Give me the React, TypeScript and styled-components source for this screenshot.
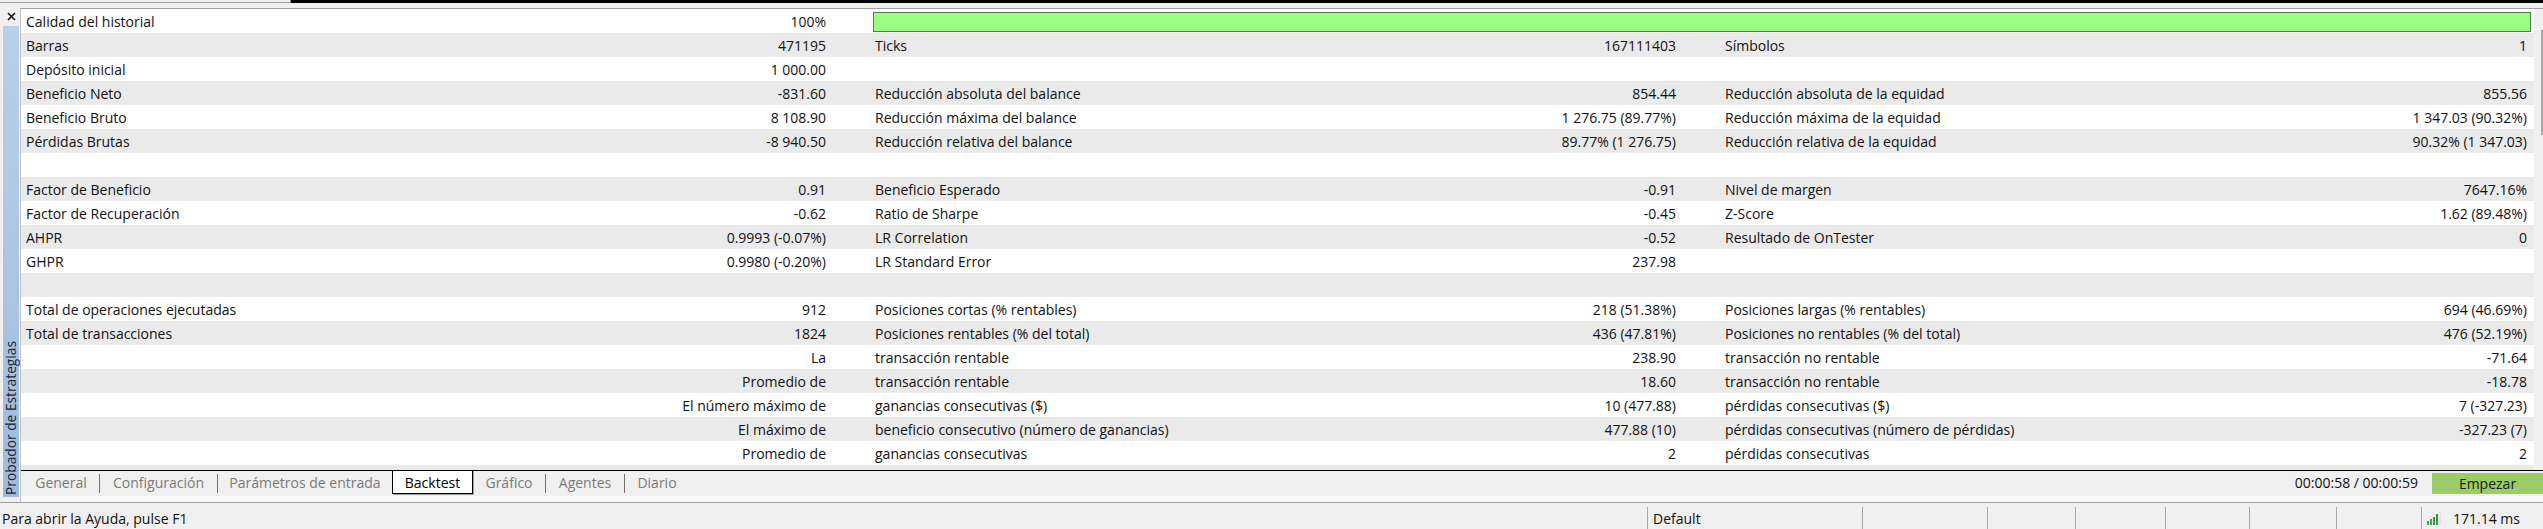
import React from "react";
import styled, { createGlobalStyle } from "styled-components";

const Global = createGlobalStyle`
  html, body { margin: 0; padding: 0; background: #f0f0f0; }
  #root { width: 2543px; height: 529px; overflow: hidden; }
  * { box-sizing: border-box; }
`;

const Page = styled.div`
  width: 2543px;
  height: 529px;
  display: flex;
  flex-direction: column;
  background: #f0f0f0;
  color: #111;
  font-family: "Open Sans", "Noto Sans", sans-serif;
  font-size: 14px;
  line-height: 25px;
`;

const TopEdge = styled.div`
  height: 8px;
  flex: none;
  display: flex;
  align-items: flex-start;
`;
const TopLeft = styled.div`
  width: 291px;
  height: 3px;
  border-bottom: 1px solid #a0a0a0;
  border-right: 1px solid #808080;
`;
const TopRight = styled.div`
  flex: 1;
  height: 3px;
  background: #000;
`;

const Main = styled.div`
  flex: none;
  height: 494px;
  display: flex;
`;

const Side = styled.div`
  width: 20px;
  flex: none;
  display: flex;
  flex-direction: column;
  padding-left: 3px;
`;
const Close = styled.div`
  height: 18px;
  flex: none;
  display: flex;
  align-items: center;
  justify-content: center;
  padding-bottom: 2px;
`;
const VBar = styled.div`
  width: 16px;
  height: 471px;
  flex: none;
  background: linear-gradient(#b9d0ea, #9fbbdc);
  display: flex;
  flex-direction: column;
  justify-content: flex-end;
  align-items: center;
`;
const VText = styled.span`
  writing-mode: vertical-rl;
  transform: rotate(180deg);
  font-size: 13.75px;
  line-height: 16px;
  padding-top: 2px;
  color: #1c2430;
  white-space: nowrap;
`;

const Content = styled.div`
  flex: 1;
  min-width: 0;
  display: flex;
  flex-direction: column;
  border-top: 1px solid #a0a0a0;
  border-left: 1px solid #c4c4c4;
`;

const TableArea = styled.div`
  flex: none;
  height: 461px;
  display: flex;
`;
const Table = styled.div`
  width: 2513px;
  flex: none;
  background: #fff;
  overflow: hidden;
`;
const Row = styled.div<{ $alt: boolean }>`
  height: 24px;
  display: grid;
  grid-template-columns: 800px 801px 802px;
  column-gap: 49px;
  padding-left: 5px;
  background: ${(p) => (p.$alt ? "#eaeaea" : "#fff")};
  white-space: pre;
`;
const Pair = styled.div`
  display: flex;
  justify-content: space-between;
  min-width: 0;
`;
const BarRow = styled.div`
  height: 24px;
  display: grid;
  grid-template-columns: 800px 1658px;
  column-gap: 47px;
  padding-left: 5px;
  align-items: center;
  white-space: pre;
`;
const Progress = styled.div`
  height: 20px;
  margin-top: 1px;
  background: #99ff80;
  border: 1px solid #557755;
`;
const ScrollTrack = styled.div`
  flex: 1;
  display: flex;
  justify-content: flex-end;
`;
const ScrollThumb = styled.div`
  width: 2px;
  height: 105px;
  margin-top: 21px;
  background: #a8a8a8;
`;

const TabBar = styled.div`
  flex: none;
  height: 26px;
  border-top: 1px solid #000;
  display: flex;
  align-items: flex-start;
  padding-left: 2px;
`;
const Tab = styled.div<{ $w: number; $active?: boolean }>`
  width: ${(p) => p.$w}px;
  height: ${(p) => (p.$active ? 24 : 23)}px;
  margin-top: ${(p) => (p.$active ? -1 : 0)}px;
  flex: none;
  text-align: center;
  line-height: 24px;
  color: ${(p) => (p.$active ? "#000" : "#7a7a7a")};
  background: ${(p) => (p.$active ? "#fff" : "transparent")};
  border: ${(p) => (p.$active ? "1px solid #000" : "none")};
  box-shadow: ${(p) => (p.$active ? "1px 1px 0 #a0a0a0" : "none")};
`;
const TabSep = styled.div`
  width: 1px;
  height: 19px;
  margin-top: 3px;
  flex: none;
  background: #707070;
`;
const Timer = styled.div`
  margin-left: auto;
  line-height: 24px;
  color: #111;
`;
const StartButton = styled.div`
  width: 111px;
  height: 21px;
  margin: 2px 0 0 14px;
  flex: none;
  background: #9ccc65;
  text-align: center;
  line-height: 22px;
  color: #14210a;
`;
const Strip = styled.div`
  flex: 1;
  background: #f9f9f9;
`;

const StatusBar = styled.div`
  flex: none;
  height: 27px;
  border-top: 1px solid #a0a0a0;
  padding-top: 4px;
  display: flex;
  line-height: 21px;
`;
const StatusCell = styled.div<{ $w?: number; $first?: boolean }>`
  width: ${(p) => (p.$w ? `${p.$w}px` : "auto")};
  flex: ${(p) => (p.$w ? "none" : "1")};
  display: flex;
  align-items: center;
  gap: 11px;
  padding-left: ${(p) => (p.$first ? 2 : 5)}px;
  border-left: ${(p) => (p.$first ? "none" : "1px solid #a8a8a8")};
  white-space: pre;
`;

type Cell = [string, string];
type R = [Cell, Cell, Cell];
const E: Cell = ["", ""];

const rows: R[] = [
  [["Barras", "471195"], ["Ticks", "167111403"], ["Símbolos", "1"]],
  [["Depósito inicial", "1 000.00"], E, E],
  [["Beneficio Neto", "-831.60"], ["Reducción absoluta del balance", "854.44"], ["Reducción absoluta de la equidad", "855.56"]],
  [["Beneficio Bruto", "8 108.90"], ["Reducción máxima del balance", "1 276.75 (89.77%)"], ["Reducción máxima de la equidad", "1 347.03 (90.32%)"]],
  [["Pérdidas Brutas", "-8 940.50"], ["Reducción relativa del balance", "89.77% (1 276.75)"], ["Reducción relativa de la equidad", "90.32% (1 347.03)"]],
  [E, E, E],
  [["Factor de Beneficio", "0.91"], ["Beneficio Esperado", "-0.91"], ["Nivel de margen", "7647.16%"]],
  [["Factor de Recuperación", "-0.62"], ["Ratio de Sharpe", "-0.45"], ["Z-Score", "1.62 (89.48%)"]],
  [["AHPR", "0.9993 (-0.07%)"], ["LR Correlation", "-0.52"], ["Resultado de OnTester", "0"]],
  [["GHPR", "0.9980 (-0.20%)"], ["LR Standard Error", "237.98"], E],
  [E, E, E],
  [["Total de operaciones ejecutadas", "912"], ["Posiciones cortas (% rentables)", "218 (51.38%)"], ["Posiciones largas (% rentables)", "694 (46.69%)"]],
  [["Total de transacciones", "1824"], ["Posiciones rentables (% del total)", "436 (47.81%)"], ["Posiciones no rentables (% del total)", "476 (52.19%)"]],
  [["", "La"], ["transacción rentable", "238.90"], ["transacción no rentable", "-71.64"]],
  [["", "Promedio de"], ["transacción rentable", "18.60"], ["transacción no rentable", "-18.78"]],
  [["", "El número máximo de"], ["ganancias consecutivas ($)", "10 (477.88)"], ["pérdidas consecutivas ($)", "7 (-327.23)"]],
  [["", "El máximo de"], ["beneficio consecutivo (número de ganancias)", "477.88 (10)"], ["pérdidas consecutivas (número de pérdidas)", "-327.23 (7)"]],
  [["", "Promedio de"], ["ganancias consecutivas", "2"], ["pérdidas consecutivas", "2"]],
  [E, E, E],
];

const CloseIcon = () => (
  <svg width="9" height="9" viewBox="0 0 9 9" aria-hidden="true">
    <path d="M1 1 L8 8 M8 1 L1 8" stroke="#111" strokeWidth="1.6" fill="none" />
  </svg>
);

const SignalIcon = () => (
  <svg width="15" height="13" viewBox="0 0 15 13" aria-hidden="true">
    <rect x="0" y="9" width="2" height="4" fill="#3fa34d" />
    <rect x="3" y="7" width="2" height="6" fill="#3fa34d" />
    <rect x="6" y="5" width="2" height="8" fill="#2f9a3f" />
    <rect x="9" y="2" width="2" height="11" fill="#2f9a3f" />
    <rect x="12" y="0" width="2" height="13" fill="#e4e4e4" />
  </svg>
);

export default function App() {
  return (
    <Page>
      <Global />
      <TopEdge>
        <TopLeft />
        <TopRight />
      </TopEdge>
      <Main>
        <Side>
          <Close>
            <CloseIcon />
          </Close>
          <VBar>
            <VText>Probador de Estrategias</VText>
          </VBar>
        </Side>
        <Content>
          <TableArea>
            <Table>
              <BarRow>
                <Pair>
                  <span>Calidad del historial</span>
                  <span>100%</span>
                </Pair>
                <Progress />
              </BarRow>
              {rows.map((r, i) => (
                <Row key={i} $alt={i % 2 === 0}>
                  {r.map((c, j) => (
                    <Pair key={j}>
                      <span>{c[0]}</span>
                      <span>{c[1]}</span>
                    </Pair>
                  ))}
                </Row>
              ))}
            </Table>
            <ScrollTrack>
              <ScrollThumb />
            </ScrollTrack>
          </TableArea>
          <TabBar>
            <Tab $w={76}>General</Tab>
            <TabSep />
            <Tab $w={117}>Configuración</Tab>
            <TabSep />
            <Tab $w={174}>Parámetros de entrada</Tab>
            <Tab $w={81} $active>
              Backtest
            </Tab>
            <Tab $w={72}>Gráfico</Tab>
            <TabSep />
            <Tab $w={78}>Agentes</Tab>
            <TabSep />
            <Tab $w={64}>Diario</Tab>
            <Timer>00:00:58 / 00:00:59</Timer>
            <StartButton>Empezar</StartButton>
          </TabBar>
          <Strip />
        </Content>
      </Main>
      <StatusBar>
        <StatusCell $w={1647} $first>
          Para abrir la Ayuda, pulse F1
        </StatusCell>
        <StatusCell $w={215}>Default</StatusCell>
        <StatusCell $w={125} />
        <StatusCell $w={88} />
        <StatusCell $w={90} />
        <StatusCell $w={84} />
        <StatusCell $w={87} />
        <StatusCell $w={85} />
        <StatusCell>
          <SignalIcon />
          171.14 ms
        </StatusCell>
      </StatusBar>
    </Page>
  );
}
